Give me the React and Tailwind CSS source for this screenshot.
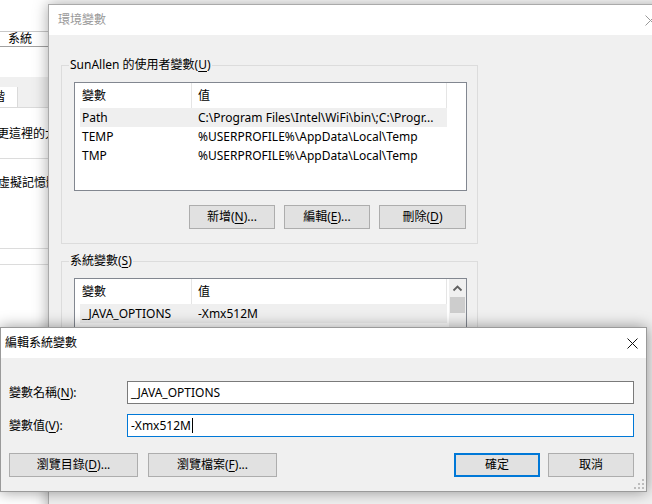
import React from "react";

const F = "font-['Noto_Sans','Noto_Sans_CJK_TC',sans-serif]";

function M({ children }) {
  return <span className="underline underline-offset-[2px]">{children}</span>;
}

function Btn({ w, children, primary }) {
  return (
    <div
      className={`flex h-[24px] items-center justify-center bg-[#e1e1e1] text-[12px] text-black ${w} ${
        primary ? "border-2 border-[#0078d7]" : "border border-[#adadad]"
      }`}
    >
      {children}
    </div>
  );
}

function ListBox({ rows, height, scroll }) {
  return (
    <div className={`relative w-[393px] ${height} overflow-hidden border border-[#828790] bg-white text-[12px] text-black`}>
      <div className="flex h-[25px]">
        <div className="flex w-[117px] items-center border-r border-[#e5e5e5] pl-[7px]">變數</div>
        <div className="flex w-[255px] items-center border-r border-[#e5e5e5] pl-[6px]">值</div>
      </div>
      {rows.map((r, i) => (
        <div key={i} className={`ml-[5px] flex h-[19px] w-[367px] items-center ${i === 0 ? "bg-[#efefef]" : ""}`}>
          <div className="w-[118px] pl-[2px] whitespace-nowrap">{r[0]}</div>
          <div className="whitespace-nowrap">{r[1]}</div>
        </div>
      ))}
      {scroll && (
        <div className="absolute right-0 top-0 bottom-0 flex w-[17px] flex-col items-center bg-[#f0f0f0]">
          <svg width="17" height="17" viewBox="0 0 17 17" className="mt-[1px]">
            <path d="M4.5 10.5 L8.5 6.5 L12.5 10.5" stroke="#606060" strokeWidth="1.8" fill="none" />
          </svg>
          <div className="h-[16px] w-[15px] bg-[#cdcdcd]" />
        </div>
      )}
    </div>
  );
}

function Group({ label, children, className }) {
  return (
    <div className={`relative w-[417px] border border-[#dcdcdc] ${className}`}>
      <div className="absolute left-[7px] top-[-9px] bg-[#f0f0f0] px-[1px] text-[12px] leading-[16px] text-black whitespace-nowrap">
        {label}
      </div>
      {children}
    </div>
  );
}

function LeftWindow() {
  return (
    <div className="absolute left-0 top-0 flex h-[504px] w-[70px] flex-col bg-white text-[12px] text-black">
      <div className="h-[32px] border-b border-[#c8c8c8]" />
      <div className="flex h-[15px] items-end border-b border-[#a0a0a0] pl-[8px] leading-[14px]">系統</div>
      <div className="h-[30px]" />
      <div className="flex h-[31px] items-end bg-[#f0f0f0] border-b border-[#dadada]">
        <div className="flex h-[20px] w-[18px] items-center overflow-hidden border-r border-[#dadada] bg-white">
          <span className="-ml-[7px]">階</span>
        </div>
      </div>
      <div className="h-[18px]" />
      <div className="h-[16px] whitespace-nowrap -ml-[3px] leading-[16px]">更這裡的大小</div>
      <div className="h-[17px] border-b border-[#dcdcdc]" />
      <div className="h-[16px]" />
      <div className="h-[16px] whitespace-nowrap -ml-[2px] leading-[16px]">虛擬記憶體</div>
      <div className="h-[58px] border-b border-[#dcdcdc]" />
      <div className="h-[16px] border-b border-[#dcdcdc]" />
    </div>
  );
}

function EnvDialog() {
  return (
    <div className="absolute left-[48px] top-[4px] flex h-[520px] w-[640px] flex-col border border-[#aaaaaa] bg-[#f0f0f0] shadow-[0_0_14px_rgba(0,0,0,0.35)]">
      <div className="relative flex h-[30px] items-center bg-white pl-[9px] text-[12px] text-[#999999]">
        環境變數
        <svg className="absolute left-[596px] top-[10px]" width="11" height="11" viewBox="0 0 11 11">
          <path d="M0.5 0.5 L10.5 10.5 M10.5 0.5 L0.5 10.5" stroke="#999" strokeWidth="1" fill="none" />
        </svg>
      </div>
      <div className="flex flex-col pl-[12px] pt-[30px]">
        <Group label={<>SunAllen 的使用者變數(<M>U</M>)</>} className="h-[179px] pl-[12px] pt-[16px]">
          <ListBox
            height="h-[109px]"
            rows={[
              ["Path", "C:\\Program Files\\Intel\\WiFi\\bin\\;C:\\Progr..."],
              ["TEMP", "%USERPROFILE%\\AppData\\Local\\Temp"],
              ["TMP", "%USERPROFILE%\\AppData\\Local\\Temp"],
            ]}
          />
          <div className="mt-[14px] flex w-[392px] justify-end gap-[9px]">
            <Btn w="w-[86px]">新增(<M>N</M>)...</Btn>
            <Btn w="w-[86px]">編輯(<M>E</M>)...</Btn>
            <Btn w="w-[87px]">刪除(<M>D</M>)</Btn>
          </div>
        </Group>
        <Group label={<>系統變數(<M>S</M>)</>} className="mt-[17px] h-[200px] pl-[12px] pt-[16px]">
          <ListBox height="h-[120px]" scroll rows={[["_JAVA_OPTIONS", "-Xmx512M"]]} />
        </Group>
      </div>
    </div>
  );
}

function EditDialog() {
  return (
    <div className="absolute left-0 top-[327px] flex h-[165px] w-[647px] flex-col border border-[#9a9a9a] bg-[#f0f0f0] shadow-[0_0_14px_rgba(0,0,0,0.4)]">
      <div className="relative flex h-[30px] items-center bg-white pl-[4px] text-[12px] text-black">
        編輯系統變數
        <svg className="absolute left-[626px] top-[10px]" width="11" height="11" viewBox="0 0 11 11">
          <path d="M0.5 0.5 L10.5 10.5 M10.5 0.5 L0.5 10.5" stroke="#111" strokeWidth="1" fill="none" />
        </svg>
      </div>
      <div className="relative flex flex-1 flex-col pl-[7px] pr-[12px] pt-[23px] text-[12px] text-black">
        <div className="flex items-center">
          <div className="w-[119px] pl-[1px]">變數名稱(<M>N</M>):</div>
          <div className="flex h-[23px] flex-1 items-center border border-[#7a7a7a] bg-white pl-[3px]">_JAVA_OPTIONS</div>
        </div>
        <div className="mt-[10px] flex items-center">
          <div className="w-[119px] pl-[1px]">變數值(<M>V</M>):</div>
          <div className="flex h-[23px] flex-1 items-center border border-[#0078d7] bg-white pl-[3px]">
            -Xmx512M<span className="ml-[1px] h-[15px] w-[1px] bg-black" />
          </div>
        </div>
        <div className="mt-[16px] flex items-center pl-[1px]">
          <Btn w="w-[129px]">瀏覽目錄(<M>D</M>)...</Btn>
          <div className="ml-[10px]">
            <Btn w="w-[129px]">瀏覽檔案(<M>F</M>)...</Btn>
          </div>
          <div className="flex-1" />
          <Btn w="w-[86px]" primary>確定</Btn>
          <div className="ml-[8px]">
            <Btn w="w-[86px]">取消</Btn>
          </div>
        </div>
        <svg className="absolute right-[1px] bottom-[1px]" width="12" height="12" viewBox="0 0 12 12">
          <rect x="9" y="1" width="2" height="2" fill="#bdbdbd" />
          <rect x="5" y="5" width="2" height="2" fill="#bdbdbd" />
          <rect x="9" y="5" width="2" height="2" fill="#bdbdbd" />
          <rect x="1" y="9" width="2" height="2" fill="#bdbdbd" />
          <rect x="5" y="9" width="2" height="2" fill="#bdbdbd" />
          <rect x="9" y="9" width="2" height="2" fill="#bdbdbd" />
        </svg>
      </div>
    </div>
  );
}

export default function App() {
  return (
    <div className={`relative h-[504px] w-[652px] overflow-hidden bg-white ${F}`}>
      <LeftWindow />
      <EnvDialog />
      <EditDialog />
    </div>
  );
}
